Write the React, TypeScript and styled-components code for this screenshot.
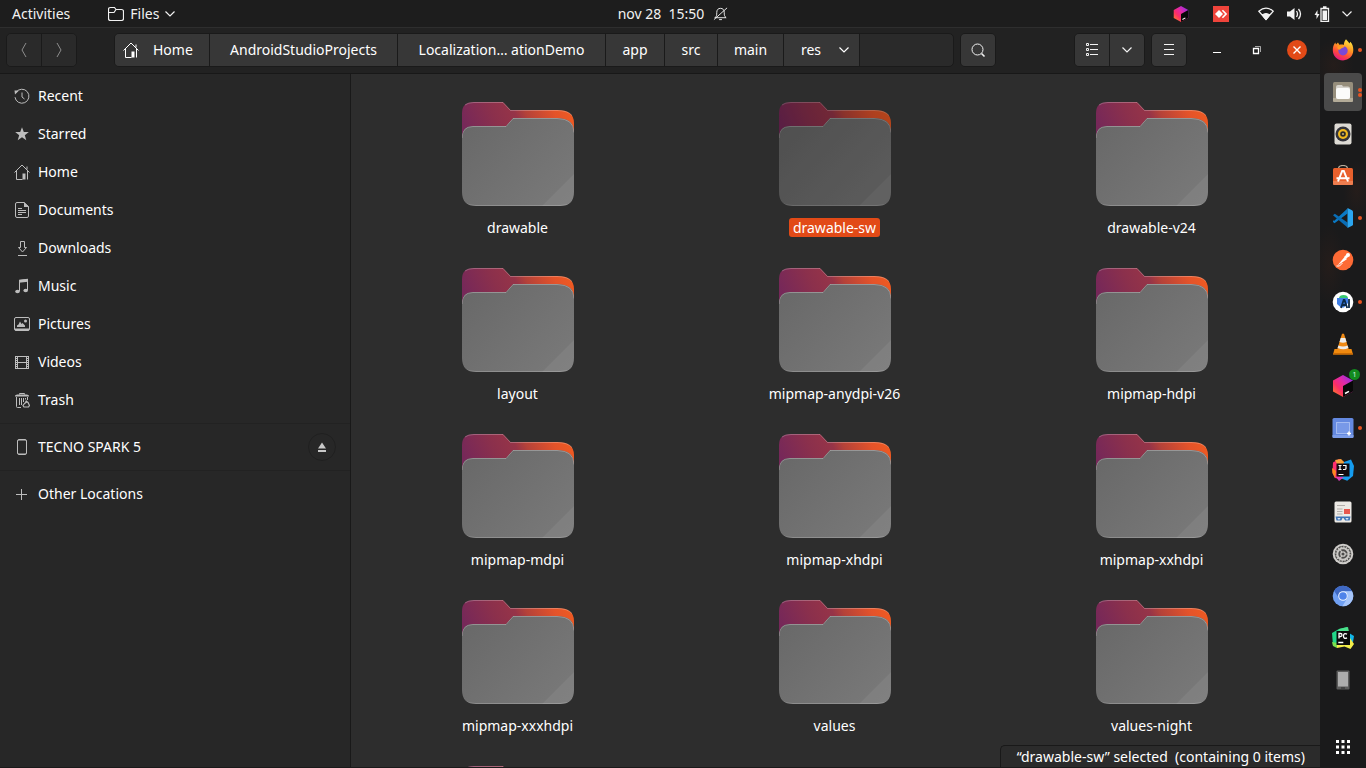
import React from "react";
import styled, { createGlobalStyle, css } from "styled-components";

const GlobalStyle = createGlobalStyle`
  *, *::before, *::after { box-sizing: border-box; }
  body {
    margin: 0;
    background: #1d1d1d;
    color: #ffffff;
    font: 14px/20px "Noto Sans", "Open Sans", sans-serif;
  }
  button { font: inherit; color: inherit; background: none; border: 0; padding: 0; margin: 0; }
  a { color: inherit; text-decoration: none; }
  ul, ol { list-style: none; margin: 0; padding: 0; }
  svg { display: block; flex: none; }
`;

const Desktop = styled.div`
  display: flex;
  flex-direction: column;
  height: 100vh;
  overflow: hidden;
`;

const TopBar = styled.header`
  display: grid;
  grid-template-columns: 1fr auto 1fr;
  align-items: center;
  height: 28px;
  flex: none;
  padding: 0 14px 0 12px;
  background: #1d1d1d;
  border-bottom: 1px solid #2e2e2e;
  color: #f2f2f2;
  white-space: pre;
`;

const TopLeft = styled.div`
  display: flex;
  gap: 38px;
`;

const TopButton = styled.button`
  display: flex;
  align-items: center;
  gap: 6px;
`;

const Clock = styled.button`
  display: flex;
  align-items: center;
  gap: 9px;
  margin-right: 18px;
`;

const Tray = styled.div`
  display: flex;
  align-items: center;
  justify-content: flex-end;
  gap: 12px;
`;

const TrayApps = styled.div`
  display: flex;
  gap: 24px;
  margin-right: 17px;
`;

const Workspace = styled.div`
  display: flex;
  flex: 1;
  min-height: 0;
`;

const Window = styled.div`
  display: flex;
  flex-direction: column;
  flex: 1;
  min-width: 0;
  border-bottom: 1px solid #1a1a1a;
`;

const HeaderBar = styled.div`
  display: flex;
  align-items: flex-start;
  height: 46px;
  flex: none;
  padding: 5px 3px 0 6px;
  background: #222222;
  border-bottom: 1px solid #181818;
`;

const Group = styled.div`
  display: flex;
  height: 34px;
  flex: none;
  border: 1px solid #1a1a1a;
  border-radius: 5px;
  overflow: hidden;
  background: #2a2a2a;
`;

const NavGroup = styled(Group)`
  margin-right: 37px;
`;

const PathBar = styled(Group)`
  flex: 1;
  min-width: 0;
  margin-right: 6px;
`;

const ViewGroup = styled(Group)`
  margin: 0 6px 0 78px;
`;

const MenuGroup = styled(Group)`
  margin-right: 10px;
`;

const BarButton = styled.button<{ $muted?: boolean }>`
  display: grid;
  place-items: center;
  width: 34px;
  background: ${(p) => (p.$muted ? "#2a2a2a" : "#373737")};
  color: ${(p) => (p.$muted ? "#8c8c8c" : "#f2f2f2")};
  & + & {
    width: 35px;
    border-left: 1px solid #1a1a1a;
  }
`;

const Crumb = styled.button<{ $width: number; $align?: "start" | "end" }>`
  display: flex;
  align-items: center;
  justify-content: ${(p) => (p.$align ? `flex-${p.$align}` : "center")};
  gap: ${(p) => (p.$align === "end" ? 18 : 14)}px;
  width: ${(p) => p.$width}px;
  padding: ${(p) => (p.$align === "end" ? "0 10px" : p.$align === "start" ? "0 8px" : 0)};
  flex: none;
  background: #373737;
  border-right: 1px solid #1a1a1a;
  white-space: nowrap;
`;

const WindowButton = styled.button`
  display: grid;
  place-items: center;
  width: 40px;
  height: 34px;
`;

const CloseDisc = styled.span`
  display: grid;
  place-items: center;
  width: 20px;
  height: 20px;
  border-radius: 50%;
  background: #e24a17;
`;

const Panes = styled.div`
  display: flex;
  flex: 1;
  min-height: 0;
`;

const Sidebar = styled.nav`
  width: 351px;
  flex: none;
  padding-top: 3px;
  background: #272727;
  border-right: 1px solid #191919;
`;

const PlaceList = styled.ul`
  & + & {
    margin-top: 4px;
    padding-top: 4px;
    border-top: 1px solid #222222;
  }
`;

const PlaceRow = styled.li`
  display: flex;
  align-items: center;
  height: 38px;
  padding: 0 14px;
`;

const PlaceLink = styled.a`
  display: flex;
  align-items: center;
  gap: 8px;
  flex: 1;
  & > svg { color: #bdbdbd; }
`;

const EjectButton = styled.button`
  display: grid;
  place-items: center;
  width: 28px;
  height: 28px;
  border: 1px solid #202020;
  border-radius: 50%;
  color: #c8c8c8;
`;

const Content = styled.main`
  position: relative;
  flex: 1;
  min-width: 0;
  overflow: hidden;
  background: #2d2d2d;
`;

const FolderGrid = styled.ul`
  display: grid;
  grid-template-columns: repeat(3, 1fr);
  grid-auto-rows: 166px;
  padding: 28px 10px 0 8px;
`;

const FolderCell = styled.li`
  display: flex;
  justify-content: center;
  align-items: flex-start;
`;

const Folder = styled.button<{ $selected?: boolean }>`
  display: flex;
  flex-direction: column;
  align-items: center;
  gap: 12px;
  width: 160px;
  ${(p) =>
    p.$selected &&
    css`
      & > svg { filter: brightness(0.76); }
      & > span { background: #e24a17; }
    `}
`;

const FolderName = styled.span`
  padding: 0 4px;
  border-radius: 3px;
  line-height: 19px;
`;

const StatusBar = styled.output`
  position: absolute;
  right: 0;
  bottom: 0;
  padding: 1px 15px 0 16px;
  background: #2b2b2b;
  border: 1px solid #191919;
  border-width: 1px 0 0 1px;
  border-top-left-radius: 5px;
  white-space: pre;
`;

const Dock = styled.aside`
  display: flex;
  flex-direction: column;
  align-items: center;
  width: 46px;
  flex: none;
  padding: 3px 0 2px;
  background:
    radial-gradient(ellipse 14px 30px at 80% 22%, #2e1f1a88, transparent),
    radial-gradient(ellipse 16px 40px at 20% 32%, #2e1f1a88, transparent),
    radial-gradient(ellipse 20px 26px at 30% 5%, #2e1f1a88, transparent),
    #1a1a1b;
`;

const DockList = styled.ul`
  display: flex;
  flex-direction: column;
  gap: 4px;
  margin-bottom: auto;
`;

const DockButton = styled.button<{ $active?: boolean }>`
  position: relative;
  display: grid;
  place-items: center;
  width: 38px;
  height: 38px;
  border-radius: 4px;
  background: ${(p) => (p.$active ? "#4a4a4a" : "transparent")};
`;

const Running = styled.span`
  position: absolute;
  right: 0;
  top: 0;
  height: 100%;
  display: flex;
  flex-direction: column;
  justify-content: center;
  gap: 1px;
  & > i {
    width: 4px;
    height: 4px;
    border-radius: 50%;
    background: #e95420;
  }
`;

const Badge = styled.span`
  position: absolute;
  right: 2px;
  top: 2px;
  width: 11px;
  height: 11px;
  border-radius: 50%;
  background: #128a1e;
  color: #dff5e0;
  font-size: 7px;
  line-height: 11px;
  text-align: center;
`;

type IconProps = { size?: number; children: React.ReactNode };

const Line = ({ size = 16, children }: IconProps) => (
  <svg width={size} height={size} viewBox="0 0 16 16" fill="none" stroke="currentColor" aria-hidden="true">
    {children}
  </svg>
);

const Solid = ({ size = 22, children }: IconProps) => (
  <svg width={size} height={size} viewBox="0 0 22 22" aria-hidden="true">
    {children}
  </svg>
);

const Caret = () => (
  <svg width="10" height="6" viewBox="0 0 10 6" fill="none" stroke="currentColor" strokeWidth="1.2" aria-hidden="true">
    <path d="M.5.5 5 5 9.500.5" />
  </svg>
);

const HomeIcon = () => (
  <Line>
    <path d="M.5 8.500 8 1l7.500 7.500M2.500 7v8.500h6M13.500 7v8.500M13 2.500v3" />
    <path d="M8.500 9.500h3v6h-3z" fill="currentColor" stroke="none" />
  </Line>
);

const placeIcons: Record<string, React.ReactNode> = {
  Recent: (
    <Line>
      <path d="M2.200 4.200A7 7 0 1 1 1 9.200M8 4.500V9l2.500 2M2.200 4.200h.1" />
      <path d="M.5 2.500h4.500L1 6.500z" fill="currentColor" stroke="none" />
    </Line>
  ),
  Starred: (
    <Line>
      <path d="M8 1.300 9.800 6h5l-4 3.200 1.500 5L8 11.300l-4.300 2.900 1.500-5L1.200 6h5z" fill="currentColor" stroke="none" />
    </Line>
  ),
  Home: <HomeIcon />,
  Documents: (
    <Line>
      <path d="M3 .5h7l4.500 4V14a1.500 1.500 0 0 1-1.500 1.500H3A1.500 1.500 0 0 1 1.500 14V2A1.500 1.500 0 0 1 3 .5zM4 6.500h4M4 8.500h8M4 10.500h8M4 12.500h4" />
      <path d="M10 0l5 5h-5z" fill="currentColor" stroke="none" />
    </Line>
  ),
  Downloads: (
    <Line>
      <path d="M6.500 1.500h4v6h2L8.500 12l-4-4.500h2zM4 15.500h9" />
    </Line>
  ),
  Music: (
    <Line>
      <path d="M5.500 13V2.500l8-1V12" />
      <path d="M5 1.800 14 .8v3l-9 1z" fill="currentColor" stroke="none" />
      <ellipse cx="3.500" cy="13.500" rx="2.300" ry="1.800" fill="currentColor" stroke="none" />
      <ellipse cx="11.700" cy="12.500" rx="2.300" ry="1.800" fill="currentColor" stroke="none" />
    </Line>
  ),
  Pictures: (
    <Line>
      <rect x=".5" y="1.500" width="15" height="13" rx="1.500" />
      <path d="M1 12.500h14v2H1zM3 11V9.500l1.500-1 1.500-3L7.500 8l1-1L11 9.500V11z" fill="currentColor" stroke="none" />
      <circle cx="11.500" cy="5" r="1.500" fill="currentColor" stroke="none" />
    </Line>
  ),
  Videos: (
    <Line>
      <path d="M3.500 2v13M12.500 2v13M3.500 2.500h9M3.500 8.500h9M3.500 14.500h9M1.500 2v13M14.500 2v13" />
      <path d="M2.500 2v13M13.500 2v13" strokeDasharray="1 1" />
    </Line>
  ),
  Trash: (
    <Line>
      <path d="M2.500 5v9.500a1 1 0 0 0 1 1H7M13.500 5v3M5.500 6v7M7.500 6v7M9.500 6v4M11.500 6v1.500M5.500 2.500v-1h5v1" />
      <path d="M1 4.500h14v-1l-2-1H3l-2 1z" fill="currentColor" stroke="none" />
      <path d="m12.500 8.500-1 2M10.500 11.500l-1.500 2 1 1.500h4.500l1-1.500-1.500-3-1-.8z" strokeWidth="1.200" />
    </Line>
  ),
  "TECNO SPARK 5": (
    <Line>
      <rect x="3.500" y=".5" width="9" height="15" rx="1.500" />
      <path d="M4 1.500h8M4 14.500h8" opacity=".5" />
    </Line>
  ),
  "Other Locations": (
    <Line>
      <path d="M2 8.500h11M7.500 3v11" />
    </Line>
  ),
};

const FolderArt = () => (
  <svg width="112" height="104" viewBox="0 0 112 104" aria-hidden="true">
    <defs>
      <linearGradient id="folder-back" x1="6" y1="32" x2="100" y2="-10" gradientUnits="userSpaceOnUse">
        <stop offset="0" stopColor="#762859" />
        <stop offset=".3" stopColor="#8b304c" />
        <stop offset=".5" stopColor="#963448" />
        <stop offset=".6" stopColor="#b54239" />
        <stop offset=".85" stopColor="#e4532a" />
        <stop offset="1" stopColor="#ee5a22" />
      </linearGradient>
      <linearGradient id="folder-front" x1="10" y1="20" x2="100" y2="104" gradientUnits="userSpaceOnUse">
        <stop offset="0" stopColor="#696969" />
        <stop offset="1" stopColor="#797979" />
      </linearGradient>
      <clipPath id="folder-shape">
        <path d="M0 36Q0 24 11 24h33l7-8h44q17 0 17 14v60q0 14-14 14H14Q0 104 0 90z" />
      </clipPath>
    </defs>
    <path d="M0 11Q0 0 12 0h29l7.500 8H95q17 0 17 13v20H0z" fill="url(#folder-back)" />
    <path d="M3 3Q6 .5 12 .5h29l7.500 8H95q11 0 15 5" fill="none" stroke="#fff" strokeOpacity=".25" />
    <g clipPath="url(#folder-shape)">
      <path d="M0 0h112v104H0z" fill="url(#folder-front)" />
      <path d="M112 72v32H80z" fill="#fff" fillOpacity=".06" />
      <path d="M0 36Q0 24.500 11 24.500h33l7-8h44q17 0 17 14" fill="none" stroke="#fff" strokeOpacity=".28" />
      <path d="M3 101q4 2.500 11 2.500h84q8 0 12-3" fill="none" stroke="#fff" strokeOpacity=".2" />
    </g>
  </svg>
);

const ToolboxCube = () => (
  <>
    <defs>
      <linearGradient id="cube" x1="0" y1="1" x2="1" y2="0">
        <stop offset="0" stopColor="#ff8a1e" />
        <stop offset=".35" stopColor="#fb2d68" />
        <stop offset=".6" stopColor="#e12aa8" />
        <stop offset="1" stopColor="#7a2ff5" />
      </linearGradient>
    </defs>
    <path d="M11 0l10 5.500v11L11 22 1 16.500v-11z" fill="url(#cube)" />
    <path d="M11 11l10-5.500v11L11 22z" fill="#080808" />
    <path d="M13 18.500l4-2.200" stroke="#fff" strokeWidth="1.500" />
  </>
);

type DockApp = { name: string; running?: number; active?: boolean; badge?: string; icon: React.ReactNode };

const dockApps: DockApp[] = [
  {
    name: "Firefox",
    running: 1,
    icon: (
      <Solid>
        <defs>
          <linearGradient id="fox" x1=".8" y1="0" x2=".3" y2="1">
            <stop offset="0" stopColor="#fff044" />
            <stop offset=".4" stopColor="#ff9a23" />
            <stop offset=".7" stopColor="#ff4b3a" />
            <stop offset="1" stopColor="#e31587" />
          </linearGradient>
        </defs>
        <path d="M14 .3c1 1.500 2.500 2.500 3.400 4.200l.9-1.700c2.200 2.300 3 5.200 3 8.300 0 6-4.700 10.300-10.300 10.300S.8 16.800.8 11.200c0-3 .7-5.800 2.500-7.800l.7 2 2-2 1.300 2.400c2-.4 3.400-.2 4.500.2.2-2.200.9-4.300 2.200-5.700z" fill="url(#fox)" />
        <circle cx="11" cy="11.800" r="4.700" fill="#7a48d6" />
        <path d="M5.500 7.500c2-1.500 5-1.700 7.500 0l-2 1.300c-2 0-2 1.700-3.700 2-1.300 0-2.300-1.500-1.800-3.300z" fill="#ff9b20" />
      </Solid>
    ),
  },
  {
    name: "Files",
    running: 2,
    active: true,
    icon: (
      <Solid>
        <rect x="1" y="1" width="20" height="20" rx="1.500" fill="#968e7c" />
        <path d="M1 17h20v2.500a1.500 1.500 0 0 1-1.500 1.500h-17A1.500 1.500 0 0 1 1 19.500z" fill="#b3ab98" />
        <path d="M4 6q0-2 2-2h4l1 1.500h5q2 0 2 2V16q0 2-2 2H6q-2 0-2-2z" fill="#d5d2cb" />
        <rect x="4" y="7" width="14" height="11" rx="2" fill="#fbfbfa" />
      </Solid>
    ),
  },
  {
    name: "Rhythmbox",
    icon: (
      <Solid>
        <rect x="2.500" y=".5" width="17" height="21" rx="2" fill="#dedbd5" />
        <circle cx="11" cy="11" r="7.500" fill="#33333b" />
        <circle cx="11" cy="11" r="5" fill="#efb71c" />
        <circle cx="11" cy="11" r="2.800" fill="#2c2a2a" />
        <circle cx="11" cy="11" r="1.100" fill="#c5b06e" />
      </Solid>
    ),
  },
  {
    name: "Ubuntu Software",
    icon: (
      <Solid>
        <path d="M6.500 3.500c.5-4 8.500-4 9 0" fill="none" stroke="#b9ad9b" strokeWidth="1.200" />
        <rect x="1" y="3" width="20" height="17" rx="1.500" fill="#e9602c" />
        <path d="M1 16h20v2.500a1.500 1.500 0 0 1-1.500 1.500h-17A1.500 1.500 0 0 1 1 18.500z" fill="#ee7d4f" />
        <path d="M6 16.500 10.200 6h1.600L16 16.500M4.500 13.200h13" fill="none" stroke="#fff" strokeWidth="2" />
      </Solid>
    ),
  },
  {
    name: "Visual Studio Code",
    running: 1,
    icon: (
      <Solid>
        <path d="M15.500 1.500 2 14l-1-1 .1-1.500L1 15l1.500 1.200L15.500 6.500z" fill="#0a79c4" />
        <path d="M15.500 20.500 1 8.300l1.800-1.600L15.500 15.500z" fill="#0a6db5" />
        <path d="M15.500 1 20 3.200q1 .5 1 1.500v12.600q0 1-1 1.500L15.500 21z" fill="#2ba6f0" />
      </Solid>
    ),
  },
  {
    name: "Postman",
    icon: (
      <Solid>
        <circle cx="11" cy="11" r="10.300" fill="#fd6a35" />
        <path d="M5.500 16.500 12.500 8l2.300 2.300z" fill="#fff" />
        <path d="M12 8l2.500-2.500 2 2L14 10z" fill="#fff" />
        <circle cx="16" cy="6" r="2" fill="#fff" />
        <path d="M4.500 17h3l3-3" stroke="#fff" fill="none" />
      </Solid>
    ),
  },
  {
    name: "Android Studio",
    running: 1,
    icon: (
      <Solid>
        <circle cx="11" cy="11" r="10.300" fill="#fff" />
        <path d="M7 7q.5-3 4.500-3T16 7z" fill="#37c871" />
        <path d="M5 7h11v5l-4 4.500H9L5 13z" fill="#3f7fe6" />
        <path d="M9 17 11.700 9h.8l2.700 8M10 14h4.500M17 8v9" stroke="#0b2a4a" strokeWidth="1.800" fill="none" />
      </Solid>
    ),
  },
  {
    name: "VLC",
    icon: (
      <Solid>
        <path d="M2.500 16h17l1.500 5.500H1z" fill="#f18a0d" />
        <path d="M10 .8h2L17 17q-6 3.500-12 0z" fill="#ef8a16" />
        <path d="M8.700 5h4.600l1.200 4q-3.500 1.500-7 0zM6.400 12.500q4.600 2 9.200 0l.8 2.500q-5 2.500-10.800 0z" fill="#ececec" />
        <path d="M1.500 20h19l.5 1.500H1z" fill="#c96a05" />
      </Solid>
    ),
  },
  { name: "JetBrains Toolbox", badge: "1", icon: <Solid><ToolboxCube /></Solid> },
  {
    name: "Screenshot",
    running: 1,
    icon: (
      <Solid>
        <rect x=".5" y="1" width="21" height="20" rx="1.500" fill="#6489e0" />
        <path d="M.5 18h21v2q0 1-1.500 1H2Q.5 21 .5 20z" fill="#7c9dea" />
        <rect x="4.500" y="5.500" width="13" height="11" fill="#7899e8" stroke="#dbe5ff" strokeDasharray="1 1" />
        <path d="M17 14.500v4M15 16.500h4" stroke="#fff" strokeWidth="1.500" />
      </Solid>
    ),
  },
  {
    name: "IntelliJ IDEA",
    icon: (
      <Solid>
        <path d="M1 3.500 7 0l5 3-4 17-5-1-2.500-5z" fill="#ff2f70" />
        <path d="M0 9l4 3-1 7-2.500-5z" fill="#ff8b1e" />
        <path d="M3 1l6-1L14 5H5z" fill="#f7a13c" />
        <path d="M12 3l7-2.500L22 7l-1 10-5.800 4.800L8 19z" fill="#159cf0" />
        <path d="M4 18h8l-5 4z" fill="#d83bb8" />
        <rect x="4.500" y="4.500" width="13" height="13" fill="#130b10" />
        <path d="M6.500 6.500h3M8 6.500v4M6.500 10.500h3M11 6.500h3v3q0 1-1.500 1H11M6.500 15.500h5" stroke="#fff" fill="none" strokeWidth="1.200" />
      </Solid>
    ),
  },
  {
    name: "Document Viewer",
    icon: (
      <Solid>
        <rect x="2.500" y=".5" width="17" height="21" rx="1.500" fill="#ece9e5" />
        <path d="M5 4.500h8M5 8h5.500M5 10.500h5.500M5 13h5.500" stroke="#b3afab" />
        <rect x="12" y="8" width="6" height="5" fill="#e8574d" />
        <path d="M3.500 15.500h15l-.8 4h-4.500L11.500 17h-1l-1.200 2.500H4.500z" fill="#3f74b5" />
        <path d="M5.500 17h3l-.8 1.500H6zM13.500 17h3l-.5 1.500h-1.800z" fill="#d6e4f5" />
      </Solid>
    ),
  },
  {
    name: "Settings",
    icon: (
      <Solid>
        <circle cx="11" cy="11" r="10.300" fill="#cfcdca" />
        <circle cx="11" cy="11" r="8.300" fill="#4c4b4a" />
        <circle cx="11" cy="11" r="5.700" fill="none" stroke="#c9c7c4" strokeWidth="2" />
        <circle cx="11" cy="11" r="7" fill="none" stroke="#c9c7c4" strokeWidth="1.300" strokeDasharray="1.400 1.350" />
        <circle cx="11" cy="11" r="2.200" fill="none" stroke="#c9c7c4" strokeWidth="1.300" />
        <path d="M13 11h4M10 9.500 7.800 6M10 12.500 7.800 16" stroke="#c9c7c4" strokeWidth="1.200" />
      </Solid>
    ),
  },
  {
    name: "Chromium",
    icon: (
      <Solid>
        <circle cx="11" cy="11" r="10.300" fill="#6f9ff2" />
        <path d="M2.100 5.800A10.300 10.300 0 0 1 20 6.200H11a4.800 4.800 0 0 0-4.500 6.200z" fill="#3f69c4" />
        <path d="M20 6.200A10.300 10.300 0 0 1 10.300 21.300L15 13.800a4.800 4.800 0 0 0-4-7.600z" fill="#a6c5fa" />
        <circle cx="11" cy="11" r="4.800" fill="#eef4ff" />
        <circle cx="11" cy="11" r="3.800" fill="#4f83ea" />
      </Solid>
    ),
  },
  {
    name: "PyCharm",
    icon: (
      <Solid>
        <path d="M0 6l7-4 8-2v5L6 20l-5-1.500z" fill="#21d789" />
        <path d="M7 2l9-2 1 5H6z" fill="#4be08a" />
        <path d="M17 6l5 3-1 6-4-1z" fill="#12b5e8" />
        <path d="M18 11l4 6-3.500 5-6-2.500L5 21v-4h13z" fill="#f4ee4a" />
        <path d="M0 15l5 1v5l-4-2z" fill="#7be04f" />
        <rect x="4.500" y="4" width="13.500" height="14" fill="#0a0a0a" />
        <path d="M7 11.500v-5h1.500a1.300 1.300 0 0 1 0 3H7M15 7.200q-3.500-1.700-3.500 1.800t3.500 1.800M6.300 15.500h5" stroke="#fff" fill="none" strokeWidth="1.300" />
      </Solid>
    ),
  },
  {
    name: "Phone",
    icon: (
      <Solid>
        <rect x="4.500" y="1.500" width="13" height="19" rx="1" fill="#5c5c5c" />
        <rect x="6" y="3" width="10" height="14.500" fill="#adadad" />
        <path d="M9 19h4" stroke="#2d2d2d" />
      </Solid>
    ),
  },
];

const places = ["Recent", "Starred", "Home", "Documents", "Downloads", "Music", "Pictures", "Videos", "Trash"];

const crumbs: { label: string; width: number; align?: "start" | "end" }[] = [
  { label: "Home", width: 95, align: "start" },
  { label: "AndroidStudioProjects", width: 188 },
  { label: "Localization… ationDemo", width: 208 },
  { label: "app", width: 59 },
  { label: "src", width: 53 },
  { label: "main", width: 66 },
  { label: "res", width: 76, align: "end" },
];

const folders = [
  "drawable", "drawable-sw", "drawable-v24",
  "layout", "mipmap-anydpi-v26", "mipmap-hdpi",
  "mipmap-mdpi", "mipmap-xhdpi", "mipmap-xxhdpi",
  "mipmap-xxxhdpi", "values", "values-night",
  "",
];

const Place = ({ name, children }: { name: string; children?: React.ReactNode }) => (
  <PlaceRow>
    <PlaceLink href="#">
      {placeIcons[name]}
      {name}
    </PlaceLink>
    {children}
  </PlaceRow>
);

export default function App() {
  return (
    <Desktop>
      <GlobalStyle />
      <TopBar>
        <TopLeft>
          <TopButton>Activities</TopButton>
          <TopButton>
            <Line>
              <path d="M2.500 1.500h4l1.500 2h5.500q2 0 2 2v7q0 2-2 2h-11q-2 0-2-2v-9q0-2 2-2zM.5 6.500h5.500l2-3" strokeWidth="1.200" />
            </Line>
            Files
            <Caret />
          </TopButton>
        </TopLeft>
        <Clock>
          {"nov 28  15:50"}
          <Line size={15}>
            <path d="M2 12.500h12c-2-1.500-2-3-2-5.500 0-3-1.500-4.500-4-4.500S4 4 4 7c0 2.500 0 4-2 5.500zM6.500 14.500h3M1 14.500 15 2" />
          </Line>
        </Clock>
        <Tray>
          <TrayApps>
            <Solid size={16}><ToolboxCube /></Solid>
            <svg width="16" height="16" viewBox="0 0 16 16" aria-hidden="true">
              <path d="M0 0h16v16H0z" fill="#ef443b" />
              <path d="M6 4l4 4-4 4-4-4z" fill="#fff" />
              <path d="M8.800 4.700 10 3.800 14.200 8 10 12.200l-1.200-.9L12 8z" fill="#fff" />
            </svg>
          </TrayApps>
          <Line>
            <path d="M.8 5.200Q8-1 15.200 5.200L8 13.500z" strokeWidth="1.300" />
            <path d="M4 8.700q4-2.500 8 0L8 14z" fill="currentColor" />
          </Line>
          <Line>
            <path d="M1 5.500h3L8.500 2v12L4 10.500H1z" fill="currentColor" stroke="none" />
            <path d="M10.500 5q2 3 0 6M12.500 3q4 5 0 10" strokeWidth="1.300" />
          </Line>
          <Line>
            <path d="M7 2.500h7.500v13H7zM9 1h3.500" strokeWidth="1.300" />
            <path d="M8.500 4.500H13v9.500H8.500zM3.500 4 .5 9h2v4l3-5h-2z" fill="currentColor" stroke="none" />
          </Line>
          <Caret />
        </Tray>
      </TopBar>

      <Workspace>
        <Window>
          <HeaderBar>
            <NavGroup>
              <BarButton $muted aria-label="Back">
                <Line><path d="M10 1 6 8l4 7" /></Line>
              </BarButton>
              <BarButton $muted aria-label="Forward">
                <Line><path d="M6 1l4 7-4 7" /></Line>
              </BarButton>
            </NavGroup>
            <PathBar>
              {crumbs.map(({ label, width, align }) => (
                <Crumb key={label} $width={width} $align={align}>
                  {label === "Home" && <HomeIcon />}
                  {label}
                  {label === "res" && <Caret />}
                </Crumb>
              ))}
            </PathBar>
            <Group>
              <BarButton aria-label="Search">
                <Line><circle cx="7.500" cy="7.500" r="5.500" /><path d="M11.500 11.500l3 3" strokeWidth="1.600" /></Line>
              </BarButton>
            </Group>
            <ViewGroup>
              <BarButton aria-label="List view">
                <Line>
                  <path d="M6 2.500h8M6 7.500h8M6 12.500h8M2.500 1.500h2v2h-2zM2.500 6.500h2v2h-2zM2.500 11.500h2v2h-2z" />
                </Line>
              </BarButton>
              <BarButton aria-label="View options"><Caret /></BarButton>
            </ViewGroup>
            <MenuGroup>
              <BarButton aria-label="Menu">
                <Line><path d="M3 2.500h10M3 7.500h10M3 12.500h10" /></Line>
              </BarButton>
            </MenuGroup>
            <WindowButton aria-label="Minimize">
              <Line><path d="M4 10.500h8" /></Line>
            </WindowButton>
            <WindowButton aria-label="Restore">
              <Line>
                <path d="M4.500 6.500h5v5h-5z" strokeWidth="1.300" />
                <path d="M6 4.500h5.500V10" opacity=".6" />
              </Line>
            </WindowButton>
            <WindowButton aria-label="Close">
              <CloseDisc>
                <Line><path d="M4.500 4.500l7 7M11.500 4.500l-7 7" strokeWidth="1.400" /></Line>
              </CloseDisc>
            </WindowButton>
          </HeaderBar>

          <Panes>
            <Sidebar aria-label="Places">
              <PlaceList>
                {places.map((name) => <Place key={name} name={name} />)}
              </PlaceList>
              <PlaceList>
                <Place name="TECNO SPARK 5">
                  <EjectButton aria-label="Eject">
                    <Line>
                      <path d="M8 3.500 12 9.500H4zM4 11h8v2H4z" fill="currentColor" stroke="none" />
                    </Line>
                  </EjectButton>
                </Place>
              </PlaceList>
              <PlaceList>
                <Place name="Other Locations" />
              </PlaceList>
            </Sidebar>

            <Content>
              <FolderGrid>
                {folders.map((name) => (
                  <FolderCell key={name}>
                    <Folder $selected={name === "drawable-sw"}>
                      <FolderArt />
                      {name && <FolderName>{name}</FolderName>}
                    </Folder>
                  </FolderCell>
                ))}
              </FolderGrid>
              <StatusBar>{"“drawable-sw” selected  (containing 0 items)"}</StatusBar>
            </Content>
          </Panes>
        </Window>

        <Dock aria-label="Applications">
          <DockList>
            {dockApps.map(({ name, running = 0, active, badge, icon }) => (
              <li key={name}>
                <DockButton $active={active} aria-label={name}>
                  {icon}
                  <Running>{Array.from({ length: running }, (_, i) => <i key={i} />)}</Running>
                  {badge && <Badge>{badge}</Badge>}
                </DockButton>
              </li>
            ))}
          </DockList>
          <DockButton aria-label="Show applications">
            <Line>
              <path d="M1 2.500h14M1 8h14M1 13.500h14" strokeWidth="3" strokeDasharray="3 2.500" />
            </Line>
          </DockButton>
        </Dock>
      </Workspace>
    </Desktop>
  );
}
